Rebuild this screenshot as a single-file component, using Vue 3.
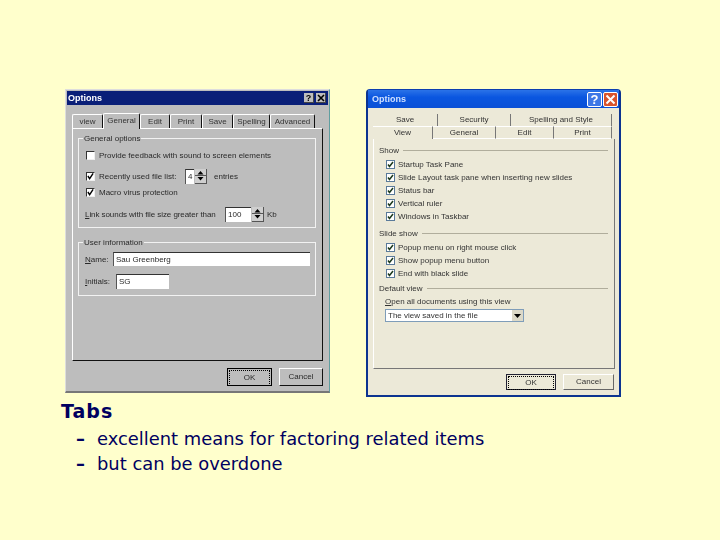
<script setup>
const oldTabs = [
  { label: 'view', w: 31 },
  { label: 'General', w: 37, active: true },
  { label: 'Edit', w: 30 },
  { label: 'Print', w: 32 },
  { label: 'Save', w: 31 },
  { label: 'Spelling', w: 37 },
  { label: 'Advanced', w: 45 }
]
const backTabs = [
  { label: 'Save', w: 65 },
  { label: 'Security', w: 73 },
  { label: 'Spelling and Style', w: 101 }
]
const frontTabs = [
  { label: 'View', w: 60, active: true },
  { label: 'General', w: 63 },
  { label: 'Edit', w: 58 },
  { label: 'Print', w: 58 }
]
const showRows = ['Startup Task Pane', 'Slide Layout task pane when inserting new slides', 'Status bar', 'Vertical ruler', 'Windows in Taskbar']
const slideRows = ['Popup menu on right mouse click', 'Show popup menu button', 'End with black slide']
</script>

<template>
  <main class="slide">
    <div class="windows">
      <section class="dlg old">
        <header class="old-title">
          <span>Options</span>
          <span class="old-btns">
            <span class="old-btn">?</span>
            <span class="old-btn"><svg width="8" height="8" viewBox="0 0 8 8"><path d="M1 1l6 6M7 1l-6 6" stroke="#000" stroke-width="1.6"/></svg></span>
          </span>
        </header>
        <nav class="old-tabs">
          <span v-for="t in oldTabs" :key="t.label" class="old-tab" :class="{ on: t.active }" :style="{ width: t.w + 'px' }">{{ t.label }}</span>
        </nav>
        <div class="old-panel">
          <div class="group g1">
            <span class="legend">General options</span>
            <div class="row r1"><i class="cb"></i>Provide feedback with sound to screen elements</div>
            <div class="row r2">
              <i class="cb"><svg width="8" height="8" viewBox="0 0 8 8"><path d="M1 4l2 3 4-6" fill="none" stroke="#000" stroke-width="1.6"/></svg></i>
              <span class="recent">Recently used file list:</span>
              <span class="field f4">4</span>
              <span class="spin"><svg width="11" height="13" viewBox="0 0 11 13"><path d="M5.500 2l3 3.500h-6zM2.500 8h6l-3 3.500z" fill="#000"/><path d="M0 6.500h11" stroke="#555"/></svg></span>
              <span class="after4">entries</span>
            </div>
            <div class="row r3"><i class="cb"><svg width="8" height="8" viewBox="0 0 8 8"><path d="M1 4l2 3 4-6" fill="none" stroke="#000" stroke-width="1.6"/></svg></i>Macro virus protection</div>
            <div class="row r4">
              <span class="link"><u>L</u>ink sounds with file size greater than</span>
              <span class="field f100">100</span>
              <span class="spin"><svg width="11" height="13" viewBox="0 0 11 13"><path d="M5.500 2l3 3.500h-6zM2.500 8h6l-3 3.500z" fill="#000"/><path d="M0 6.500h11" stroke="#555"/></svg></span>
              <span class="kb">Kb</span>
            </div>
          </div>
          <div class="group g2">
            <span class="legend">User information</span>
            <div class="row n1"><span class="lbl"><u>N</u>ame:</span><span class="field name">Sau Greenberg</span></div>
            <div class="row n2"><span class="lbl lbl2"><u>I</u>nitials:</span><span class="field ini">SG</span></div>
          </div>
        </div>
        <footer class="old-foot">
          <span class="old-ok"><span>OK</span></span>
          <span class="old-cancel">Cancel</span>
        </footer>
      </section>

      <section class="dlg xp">
        <header class="xp-title">
          <span>Options</span>
          <span class="xp-btns">
            <span class="xp-btn help">?</span>
            <span class="xp-btn close"><svg width="11" height="11" viewBox="0 0 11 11"><path d="M1.5 1.5l8 8M9.500 1.500l-8 8" stroke="#fff" stroke-width="2"/></svg></span>
          </span>
        </header>
        <nav class="xp-tabs back">
          <span v-for="t in backTabs" :key="t.label" class="xp-tab" :style="{ width: t.w + 'px' }">{{ t.label }}</span>
        </nav>
        <nav class="xp-tabs front">
          <span v-for="t in frontTabs" :key="t.label" class="xp-tab" :class="{ on: t.active }" :style="{ width: t.w + 'px' }">{{ t.label }}</span>
        </nav>
        <div class="xp-panel">
          <div class="heading h-show"><span>Show</span><i></i></div>
          <div v-for="r in showRows" :key="r" class="xp-row"><b class="xcb"><svg width="7" height="7" viewBox="0 0 7 7"><path d="M1 3.500l1.500 2 3.500-4.500" fill="none" stroke="#1d3a1d" stroke-width="1.500"/></svg></b>{{ r }}</div>
          <div class="heading h-slide"><span>Slide show</span><i></i></div>
          <div v-for="r in slideRows" :key="r" class="xp-row"><b class="xcb"><svg width="7" height="7" viewBox="0 0 7 7"><path d="M1 3.500l1.500 2 3.500-4.500" fill="none" stroke="#1d3a1d" stroke-width="1.500"/></svg></b>{{ r }}</div>
          <div class="heading h-default"><span>Default view</span><i></i></div>
          <div class="open-label"><u>O</u>pen all documents using this view</div>
          <div class="combo"><span>The view saved in the file</span><em><svg width="7" height="4" viewBox="0 0 7 4"><path d="M0 0h7L3.500 4z" fill="#000"/></svg></em></div>
        </div>
        <footer class="xp-foot">
          <span class="xp-ok"><span>OK</span></span>
          <span class="xp-cancel">Cancel</span>
        </footer>
      </section>
    </div>

    <div class="caption">
      <h1>Tabs</h1>
      <ul>
        <li><span class="dash">–</span>excellent means for factoring related items</li>
        <li><span class="dash">–</span>but can be overdone</li>
      </ul>
    </div>
  </main>
</template>

<style>
html, body { margin: 0; background: #ffffcc; }
</style>

<style scoped>
.slide {
  width: 720px; height: 540px; box-sizing: border-box; overflow: hidden;
  padding: 89px 0 0 65px; background: #ffffcc;
  font-family: "Liberation Sans", Arial, sans-serif;
}
.windows { display: flex; align-items: flex-start; gap: 36px; }
.dlg { box-sizing: border-box; flex: none; font-size: 8px; filter: blur(0.4px); }
u { text-decoration: underline; }

/* Classic dialog */
.old {
  width: 265px; height: 304px; padding: 1px; color: #2a2a2a; background: #bdbdbd;
  border-right: 1px solid #5f9ea0; border-bottom: 2px solid #777; border-left: 1px solid #ddd; border-top: 1px solid #ddd;
}
.old-title {
  height: 14px; display: flex; justify-content: space-between; align-items: center;
  padding-left: 1px; background: #0a1f78; color: #fff; font-weight: 700; font-size: 9px;
}
.old-btns { display: flex; gap: 2px; margin-right: 2px; }
.old-btn {
  width: 10px; height: 10px; background: #bdbdbd; color: #000; display: flex;
  align-items: center; justify-content: center; font-size: 9px; font-weight: 700;
  border-right: 1px solid #444; border-bottom: 1px solid #444; box-sizing: border-box;
}
.old-tabs { display: flex; height: 15px; margin: 8px 0 0 5px; align-items: flex-end; }
.old-tab {
  box-sizing: border-box; height: 14px; flex: none; text-align: center; line-height: 14px;
  border-top: 1px solid #fff; border-left: 1px solid #fff; border-right: 1px solid #111;
  border-radius: 2px 2px 0 0; color: #333;
}
.old-tab.on { height: 16px; margin-bottom: -1px; background: #bdbdbd; position: relative; z-index: 1; }
.old-panel {
  box-sizing: border-box; width: 251px; height: 233px; margin-left: 5px; padding: 9px 7px 0 5px;
  border: 1px solid #fff; border-right: 1px solid #111; border-bottom: 1px solid #111;
}
.group { position: relative; box-sizing: border-box; width: 238px; border: 1px solid #f2f2f2; }
.g1 { height: 90px; }
.g2 { height: 54px; margin-top: 14px; }
.legend { position: absolute; left: 4px; top: -6px; padding: 0 1px; background: #bdbdbd; line-height: 11px; }
.row { display: flex; align-items: center; height: 14px; white-space: nowrap; }
.r1 { margin-top: 9px; padding-left: 7px; }
.r2 { margin-top: 7px; padding-left: 7px; }
.r3 { margin-top: 2px; padding-left: 7px; }
.r4 { margin-top: 8px; padding-left: 6px; }
.cb {
  box-sizing: border-box; width: 9px; height: 9px; margin-right: 4px; background: #fff;
  border: 1px solid #333; border-right-color: #eee; border-bottom-color: #eee;
  display: flex; align-items: center; justify-content: center; flex: none;
}
.recent { width: 86px; }
.field {
  box-sizing: border-box; background: #fff; display: block; line-height: 13px; padding-left: 2px;
  border-top: 1px solid #333; border-left: 1px solid #555;
}
.f4 { width: 9px; height: 15px; flex: none; }
.spin {
  box-sizing: border-box; width: 12px; height: 15px; background: #cfcfcf; margin-left: 1px; flex: none;
  border-right: 1px solid #555; border-bottom: 1px solid #555; display: flex;
}
.after4 { margin-left: 7px; }
.link { width: 140px; letter-spacing: -0.07px; }
.f100 { width: 26px; height: 15px; flex: none; }
.kb { margin-left: 3px; }
.lbl { width: 28px; padding-left: 6px; flex: none; }
.lbl2 { width: 31px; }
.n1 { margin-top: 9px; }
.n2 { margin-top: 8px; height: 15px; }
.name { width: 197px; height: 14px; }
.ini { width: 53px; height: 15px; }
.old-foot { display: flex; justify-content: flex-end; gap: 7px; margin: 7px 5px 0 0; }
.old-ok, .old-cancel {
  box-sizing: border-box; height: 18px; line-height: 16px; text-align: center;
}
.old-ok { width: 45px; border: 1px solid #000; padding: 1px; }
.old-ok span { display: block; height: 14px; line-height: 13px; border: 1px dotted #000; }
.old-cancel { width: 44px; border-top: 1px solid #fff; border-left: 1px solid #fff; border-right: 1px solid #111; border-bottom: 1px solid #111; }

/* XP dialog */
.xp {
  width: 255px; height: 308px; background: #ece9d8; color: #333;
  border: 2px solid #0c3490; border-top: 1px solid #0c3fb0; border-radius: 4px 4px 0 0;
}
.xp-title {
  height: 18px; display: flex; justify-content: space-between; align-items: center; padding-left: 4px;
  background: linear-gradient(180deg, #2b73e8 0%, #0a56e0 40%, #0a50d6 100%);
  color: #cfe0ff; font-size: 9px; font-weight: 700;
}
.xp-btns { display: flex; gap: 1px; margin-right: 1px; }
.xp-btn {
  box-sizing: border-box; width: 15px; height: 15px; border: 1px solid #fff; border-radius: 2px;
  display: flex; align-items: center; justify-content: center; color: #fff; font-size: 13px; font-weight: 700;
}
.help { background: #3f78e6; }
.close { background: #d9532c; }
.xp-tabs { display: flex; margin-left: 5px; }
.back { margin-top: 6px; height: 12px; }
.front { height: 13px; }
.xp-tab {
  box-sizing: border-box; flex: none; text-align: center; line-height: 12px;
  border-right: 1px solid #777; border-top: 1px solid #fff;
}
.back .xp-tab { border-top: 0; }
.xp-tab.on { position: relative; z-index: 1; }
.front .xp-tab:not(.on) { border-bottom: 1px solid #fff; }
.xp-panel {
  box-sizing: border-box; width: 242px; height: 230px; margin-left: 5px; padding: 5px 6px 0 5px;
  border-right: 1px solid #777; border-bottom: 1px solid #777; border-left: 1px solid #fff;
}
.heading { display: flex; align-items: center; height: 12px; gap: 4px; }
.heading i { flex: 1; height: 1px; background: #b0ad9c; }
.h-show { margin-bottom: 2px; }
.h-slide { margin-top: 4px; margin-bottom: 2px; }
.h-default { margin-top: 2px; }
.xp-row { display: flex; align-items: center; height: 13px; padding-left: 7px; white-space: nowrap; }
.xcb {
  box-sizing: border-box; width: 9px; height: 9px; margin-right: 3px; background: #fff; flex: none;
  border: 1px solid #5a7a9a; display: flex; align-items: center; justify-content: center;
}
.open-label { margin: 3px 0 0 6px; height: 10px; line-height: 10px; }
.combo {
  box-sizing: border-box; width: 139px; height: 13px; margin: 2px 0 0 6px; background: #fff;
  border: 1px solid #7f9db9; display: flex; align-items: center; justify-content: space-between; padding-left: 2px;
}
.combo em { width: 11px; height: 11px; background: #dcd9c8; display: flex; align-items: center; justify-content: center; }
.xp-foot { display: flex; justify-content: flex-end; gap: 7px; margin: 5px 5px 0 0; }
.xp-ok, .xp-cancel { box-sizing: border-box; height: 16px; text-align: center; line-height: 14px; }
.xp-ok { width: 50px; border: 1px solid #223; padding: 1px; background: #ece9d8; }
.xp-ok span { display: block; height: 12px; line-height: 11px; border: 1px dotted #000; }
.xp-cancel { width: 51px; border: 1px solid #aaa; border-top-color: #fff; border-left-color: #fff; border-right-color: #666; border-bottom-color: #666; }

/* Caption */
.caption { margin: 3px 0 0 -4px; color: #000060; font-family: "DejaVu Sans", Verdana, sans-serif; }
.caption h1 { margin: 0; font-size: 19px; line-height: 22px; font-weight: 700; letter-spacing: 1px; }
.caption ul { list-style: none; margin: 4px 0 0; padding: 0 0 0 15px; }
.caption li { display: flex; font-size: 17.900px; line-height: 25px; white-space: nowrap; }
.dash { width: 21px; flex: none; font-weight: 700; }
</style>
